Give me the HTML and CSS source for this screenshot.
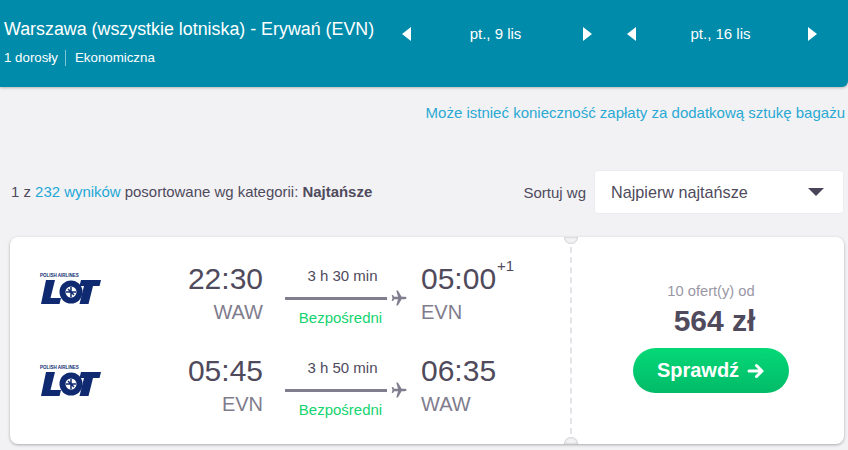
FILE: index.html
```html
<!DOCTYPE html>
<html lang="pl">
<head>
<meta charset="utf-8">
<title>Wyniki lotów</title>
<link rel="stylesheet" href="styles.css">
</head>
<body>
<header class="top">
  <div class="route">
    <div class="route-title">Warszawa (wszystkie lotniska) - Erywań (EVN)</div>
    <div class="route-meta"><span class="pax">1 dorosły</span><span>Ekonomiczna</span></div>
  </div>
  <div class="date-nav">
    <span class="tri tri-left"></span><span class="date">pt., 9 lis</span><span class="tri tri-right"></span>
  </div>
  <div class="date-nav">
    <span class="tri tri-left"></span><span class="date">pt., 16 lis</span><span class="tri tri-right"></span>
  </div>
</header>
<p class="bag-note">Może istnieć konieczność zapłaty za dodatkową sztukę bagażu</p>
<section class="toolbar">
  <div class="count">1 z <span class="link">232 wyników</span> posortowane wg kategorii: <b>Najtańsze</b></div>
  <div class="sort">
    <span class="sort-label">Sortuj wg</span>
    <div class="select"><span>Najpierw najtańsze</span><span class="caret"></span></div>
  </div>
</section>
<article class="card">
  <div class="legs">
    <div class="leg">
      <div class="logo">
        <span class="logo-small">POLISH AIRLINES</span>
        <svg class="logo-mark" width="60" height="24" viewBox="0 0 60 24"><path d="M5 0h9L9.500 18H20l-1.500 6H0z M40 0h20l-1.500 6H52l-4.500 18h-9L43 6h-4.500z" fill="#0f2a70"/><circle cx="30" cy="12" r="11.500" fill="#0f2a70"/><circle cx="30" cy="12" r="5.500" fill="#fff"/><path d="M30 7v10M25 12h10M27 9l6 6" stroke="#0f2a70" stroke-width="1.500"/></svg>
      </div>
      <div class="point end"><div class="time">22:30</div><div class="code">WAW</div></div>
      <div class="path">
        <div class="dur">3 h 30 min</div>
        <div class="line"><span class="rule"></span><svg class="plane" width="16" height="16" viewBox="0 0 16 16"><path d="M15.500 8c0-.8-.9-1.200-2-1.200H10.600L6.900.5H5.300l1.700 6.300H3.300L1.900 5H.7l.8 3-.8 3h1.200l1.400-1.800H7L5.300 15.500h1.600l3.700-6.300h2.900c1.100 0 2-.4 2-1.200z" fill="#807d8e"/></svg></div>
        <div class="stop">Bezpośredni</div>
      </div>
      <div class="point"><div class="time">05:00<sup class="plus">+1</sup></div><div class="code">EVN</div></div>
    </div>
    <div class="leg">
      <div class="logo">
        <span class="logo-small">POLISH AIRLINES</span>
        <svg class="logo-mark" width="60" height="24" viewBox="0 0 60 24"><path d="M5 0h9L9.500 18H20l-1.500 6H0z M40 0h20l-1.500 6H52l-4.500 18h-9L43 6h-4.500z" fill="#0f2a70"/><circle cx="30" cy="12" r="11.500" fill="#0f2a70"/><circle cx="30" cy="12" r="5.500" fill="#fff"/><path d="M30 7v10M25 12h10M27 9l6 6" stroke="#0f2a70" stroke-width="1.500"/></svg>
      </div>
      <div class="point end"><div class="time">05:45</div><div class="code">EVN</div></div>
      <div class="path">
        <div class="dur">3 h 50 min</div>
        <div class="line"><span class="rule"></span><svg class="plane" width="16" height="16" viewBox="0 0 16 16"><path d="M15.500 8c0-.8-.9-1.200-2-1.200H10.600L6.900.5H5.300l1.700 6.300H3.300L1.900 5H.7l.8 3-.8 3h1.200l1.400-1.800H7L5.300 15.500h1.600l3.700-6.300h2.900c1.100 0 2-.4 2-1.200z" fill="#807d8e"/></svg></div>
        <div class="stop">Bezpośredni</div>
      </div>
      <div class="point"><div class="time">06:35</div><div class="code">WAW</div></div>
    </div>
  </div>
  <aside class="price-col">
    <span class="notch notch-top"></span>
    <span class="notch notch-bottom"></span>
    <div class="offers">10 ofert(y) od</div>
    <div class="price">564 zł</div>
    <div class="cta">Sprawdź<svg class="arrow" width="18" height="16" viewBox="0 0 18 16"><path d="M2 8h13M9.500 2.500 15 8l-5.500 5.500" fill="none" stroke="#fff" stroke-width="3" stroke-linecap="round" stroke-linejoin="round"/></svg></div>
  </aside>
</article>
</body>
</html>
```
FILE: styles.css
```css
* { box-sizing: border-box; }
html, body { margin: 0; padding: 0; }
body {
  width: 848px;
  height: 450px;
  overflow: hidden;
  background: #f2f2f5;
  font-family: "Liberation Sans", Arial, sans-serif;
  color: #4f4a5c;
}
.top {
  height: 87px;
  background: #008baa;
  color: #fff;
  border-bottom-right-radius: 6px;
  box-shadow: 0 1px 3px rgba(0,0,0,.25);
  display: flex;
  align-items: flex-start;
  padding-left: 4px;
}
.route { width: 398px; padding-top: 18px; }
.route-title { font-size: 17.850px; line-height: 22px; white-space: nowrap; }
.route-meta { display: flex; align-items: center; font-size: 13.300px; line-height: 16px; margin-top: 10px; }
.pax { border-right: 1px solid rgba(255,255,255,.5); padding-right: 7px; margin-right: 9px; }
.date-nav {
  display: flex;
  align-items: center;
  justify-content: space-between;
  width: 190px;
  height: 16px;
  margin-top: 26px;
}
.date-nav + .date-nav { margin-left: 35px; }
.date { font-size: 15px; line-height: 16px; padding-right: 3px; }
.tri { width: 0; height: 0; border-top: 7px solid transparent; border-bottom: 7px solid transparent; }
.tri-left { border-right: 9px solid #fff; }
.tri-right { border-left: 9px solid #fff; }
.bag-note {
  margin: 0;
  padding-top: 17px;
  padding-right: 3px;
  text-align: right;
  font-size: 15px;
  line-height: 18px;
  color: #2aa9d2;
}
.toolbar {
  display: flex;
  justify-content: space-between;
  align-items: center;
  height: 44px;
  margin-top: 48px;
  padding: 0 4px 0 11px;
}
.count { font-size: 14.950px; margin-top: -1px; }
.link { color: #1fa8d6; }
.sort { display: flex; align-items: center; gap: 8px; }
.sort-label { font-size: 15px; }
.select {
  width: 250px;
  height: 44px;
  background: #fff;
  border-radius: 4px;
  border: 1px solid #ececf0;
  display: flex;
  align-items: center;
  justify-content: space-between;
  padding: 0 19px 0 16px;
  font-size: 16.200px;
}
.caret { width: 0; height: 0; border-left: 8px solid transparent; border-right: 8px solid transparent; border-top: 8px solid #4a4458; }
.card {
  display: flex;
  width: 834px;
  height: 207px;
  margin: 23px 0 0 10px;
  background: #fff;
  border-radius: 8px;
  box-shadow: 0 1px 3px rgba(0,0,0,.3);
}
.legs { width: 560px; padding-top: 14px; }
.leg { display: flex; height: 92px; }
.logo { width: 117px; padding: 21px 0 0 30px; display: flex; flex-direction: column; }
.logo-small { font-size: 4.500px; line-height: 7px; font-weight: bold; color: #0f2a70; white-space: nowrap; }
.logo-mark { display: block; margin: 1px 0 0 1px; }
.point { width: 120px; padding-top: 10px; }
.point.end { width: 136px; text-align: right; }
.time { font-size: 30px; line-height: 36px; position: relative; }
.plus { position: absolute; font-size: 15px; line-height: 16px; top: -3px; margin-left: 1px; }
.code { font-size: 20px; line-height: 26px; color: #7f7c8d; margin-top: 2px; }
.path { width: 158px; padding-left: 22px; }
.dur { width: 102px; padding-left: 13px; text-align: center; font-size: 15px; line-height: 16px; margin-top: 17px; white-space: nowrap; }
.line { display: flex; align-items: center; gap: 4px; height: 16px; margin-top: 6px; }
.rule { width: 102px; height: 3px; background: #807d8e; }
.stop { width: 102px; padding-left: 9px; text-align: center; font-size: 15px; line-height: 16px; color: #14d46f; margin-top: 4px; white-space: nowrap; }
.price-col {
  position: relative;
  flex: 1;
  border-left: 2px dashed #e3e3ea;
  display: flex;
  flex-direction: column;
  align-items: center;
  padding: 45px 0 0 6px;
}
.notch {
  position: absolute;
  left: -8px;
  width: 14px;
  height: 7px;
  background: #f2f2f5;
  box-shadow: inset 0 0 2px rgba(0,0,0,.3);
}
.notch-top { top: 0; border-radius: 0 0 7px 7px; }
.notch-bottom { bottom: 0; border-radius: 7px 7px 0 0; }
.offers { font-size: 14.700px; line-height: 18px; color: #9a97a5; }
.price { font-size: 30px; line-height: 36px; font-weight: bold; margin: 3px 0 0 7px; }
.cta {
  width: 156px;
  height: 45px;
  margin-top: 9px;
  border-radius: 23px;
  background: linear-gradient(#05d877, #02bb68);
  color: #fff;
  font-size: 20px;
  font-weight: bold;
  display: flex;
  align-items: center;
  justify-content: center;
  gap: 8px;
}
```
